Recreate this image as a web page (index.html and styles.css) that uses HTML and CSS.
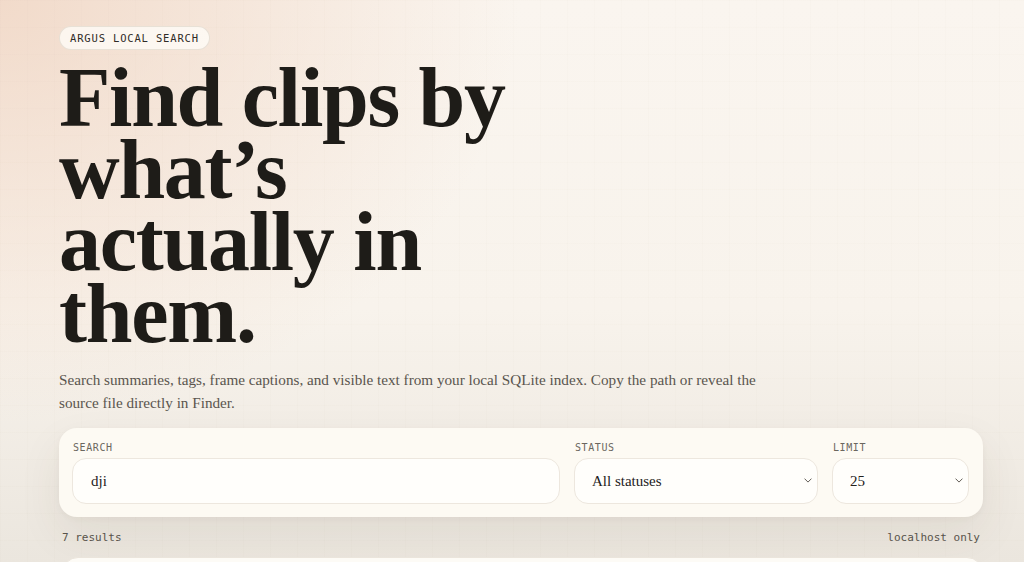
FILE: index.html
```html
<!DOCTYPE html>
<html lang="en">
<head>
<meta charset="utf-8">
<title>Argus Local Search</title>
<link rel="stylesheet" href="styles.css">
</head>
<body>
<main class="page">
  <header class="hero">
    <span class="eyebrow">ARGUS LOCAL SEARCH</span>
    <h1 class="title">Find clips by what’s actually in them.</h1>
    <p class="lede">Search summaries, tags, frame captions, and visible text from your local SQLite index. Copy the path or reveal the source file directly in Finder.</p>
  </header>

  <section class="panel">
    <label class="field">
      <span class="field-label">SEARCH</span>
      <input class="control" type="text" value="dji">
    </label>
    <label class="field">
      <span class="field-label">STATUS</span>
      <span class="select-wrap">
        <select class="control select">
          <option>All statuses</option>
        </select>
        <svg class="chev" width="10" height="6" viewBox="0 0 10 6"><path d="M1 1l4 4 4-4" fill="none" stroke="#5b564e" stroke-width="1.2" stroke-linecap="round" stroke-linejoin="round"/></svg>
      </span>
    </label>
    <label class="field">
      <span class="field-label">LIMIT</span>
      <span class="select-wrap">
        <select class="control select">
          <option>25</option>
        </select>
        <svg class="chev" width="10" height="6" viewBox="0 0 10 6"><path d="M1 1l4 4 4-4" fill="none" stroke="#5b564e" stroke-width="1.2" stroke-linecap="round" stroke-linejoin="round"/></svg>
      </span>
    </label>
  </section>

  <div class="meta">
    <span>7 results</span>
    <span>localhost only</span>
  </div>

  <article class="card"></article>
</main>
</body>
</html>
```

FILE: styles.css
```css
* { box-sizing: border-box; }
html, body { height: 100%; }
body {
  margin: 0;
  overflow: hidden;
  color: #1e1c18;
  font-family: "Liberation Serif", "DejaVu Serif", serif;
  background-color: #f7f2eb;
  background-image:
    linear-gradient(rgba(120, 90, 60, 0.01) 1px, transparent 1px),
    linear-gradient(90deg, rgba(120, 90, 60, 0.01) 1px, transparent 1px),
    radial-gradient(ellipse 520px 420px at 0 0, rgba(240, 214, 196, 0.85), rgba(240, 214, 196, 0) 100%),
    linear-gradient(180deg, #faf5ef 0%, #f8f3ec 55%, #ebe6de 100%);
  background-size: 27px 27px, 27px 27px, 100% 100%, 100% 100%;
}
.page {
  padding: 26px 41px 0 59px;
}
.hero {
  display: flex;
  flex-direction: column;
  align-items: flex-start;
}
.eyebrow {
  display: inline-block;
  height: 24px;
  line-height: 22px;
  padding: 0 10px;
  border: 1px solid rgba(230, 222, 212, 0.9);
  border-radius: 12px;
  background: rgba(255, 253, 250, 0.75);
  font-family: "DejaVu Sans Mono", "Liberation Mono", monospace;
  font-size: 10.5px;
  letter-spacing: 0.08em;
  color: #2f2b26;
}
.title {
  margin: 12px 0 0;
  max-width: 480px;
  font-family: "Liberation Serif", "DejaVu Serif", serif;
  font-weight: 700;
  font-size: 84px;
  line-height: 72px;
  letter-spacing: -0.015em;
  color: #1e1c18;
}
.lede {
  margin: 18px 0 0;
  max-width: 730px;
  font-size: 15.2px;
  line-height: 23px;
  color: #5a554e;
}
.panel {
  margin-top: 14px;
  display: grid;
  grid-template-columns: minmax(0, 1fr) 244px 137px;
  column-gap: 14px;
  padding: 14px 14px 13px 13px;
  border-radius: 18px;
  background: #fdfaf3;
  box-shadow: 0 18px 44px rgba(80, 60, 40, 0.08), 0 2px 6px rgba(80, 60, 40, 0.04);
}
.field {
  display: flex;
  flex-direction: column;
  gap: 5px;
}
.field-label {
  font-family: "DejaVu Sans Mono", "Liberation Mono", monospace;
  font-size: 10px;
  letter-spacing: 0.06em;
  color: #6b665e;
  padding-left: 1px;
}
.control {
  width: 100%;
  height: 46px;
  border: 1px solid #ede7de;
  border-radius: 14px;
  background: #fffefb;
  padding: 0 18px;
  font-family: "Liberation Serif", "DejaVu Serif", serif;
  font-size: 15px;
  color: #24211c;
  outline: none;
}
.select-wrap {
  position: relative;
  display: block;
}
.select {
  appearance: none;
  -webkit-appearance: none;
  padding-left: 17px;
}
.chev {
  position: absolute;
  right: 6px;
  top: 20px;
  width: 8px;
  height: 5px;
  pointer-events: none;
}
.meta {
  display: flex;
  justify-content: space-between;
  padding: 0 3px;
  margin-top: 14px;
  font-family: "DejaVu Sans Mono", "Liberation Mono", monospace;
  font-size: 11px;
  color: #58534b;
}
.card {
  margin: 13px 0 0 3px;
  height: 120px;
  border-radius: 16px;
  background: #fdfbf6;
  border: 1px solid #ebe5dc;
}
```
